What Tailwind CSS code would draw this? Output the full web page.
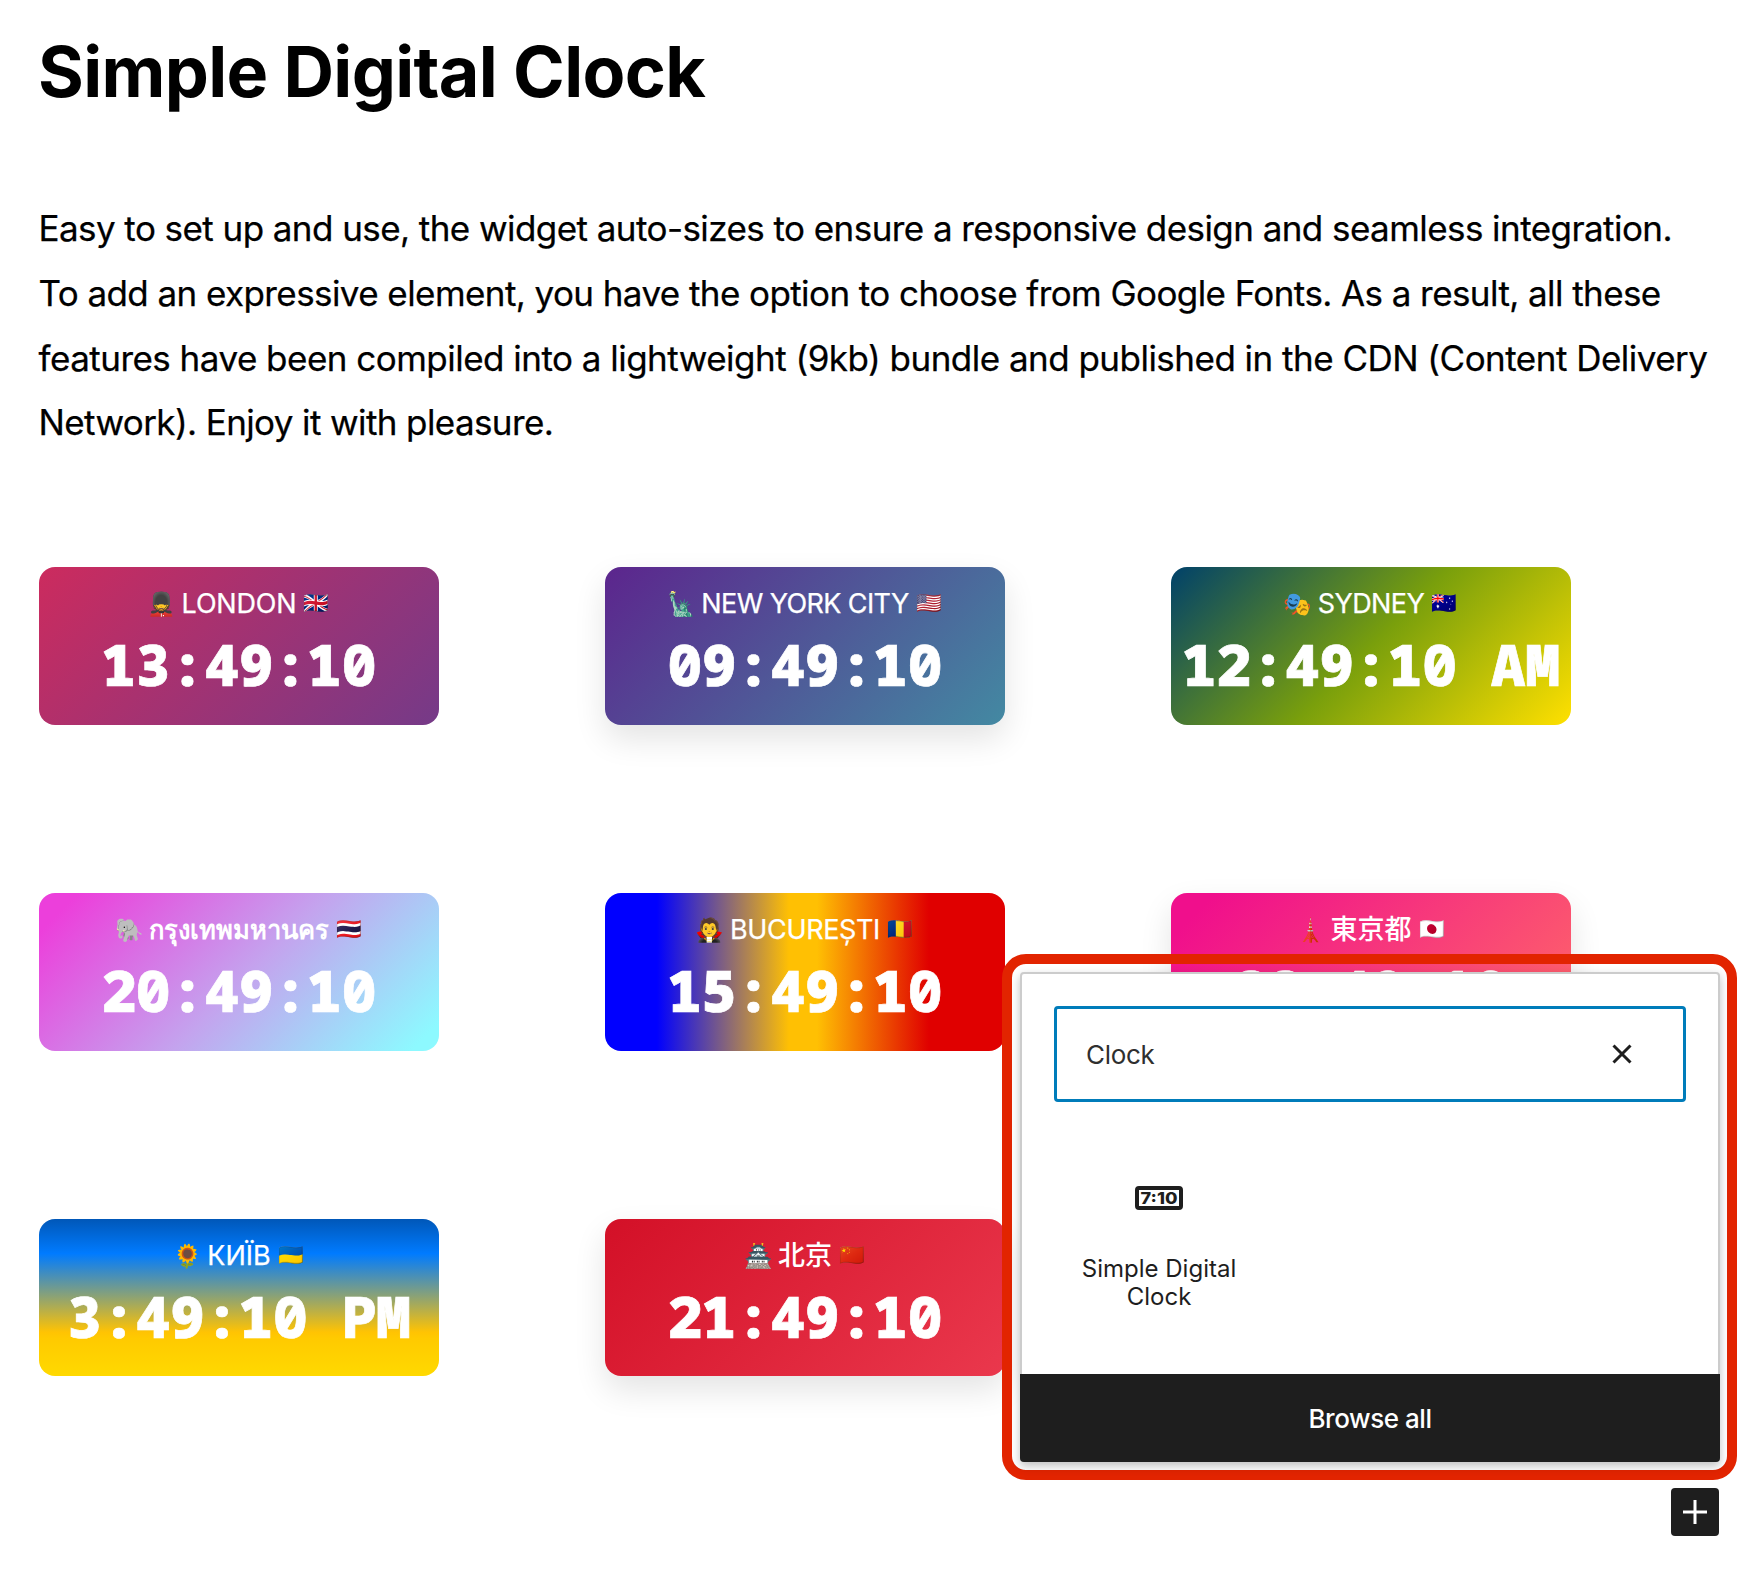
<!DOCTYPE html>
<html lang="en">
<head>
<meta charset="utf-8">
<title>Simple Digital Clock</title>
<script src="https://cdn.jsdelivr.net/npm/@tailwindcss/browser@4"></script>
</head>
<body class="relative h-[1570px] w-[1758px] overflow-hidden bg-white font-['Inter','Noto_Sans_CJK_JP',sans-serif] text-black">
<main class="flex flex-col pt-[29.5px]">
  <h1 class="pl-[38px] text-[70px] leading-[84px] font-bold tracking-[-0.66px]">Simple Digital Clock</h1>
  <p class="mt-[82.5px] pl-[38.5px] text-[35px] leading-[64.75px] whitespace-nowrap [-webkit-text-stroke:0.25px_black]">
    <span class="block tracking-[-0.565px]">Easy to set up and use, the widget auto-sizes to ensure a responsive design and seamless integration.</span>
    <span class="block tracking-[-0.58px]">To add an expressive element, you have the option to choose from Google Fonts. As a result, all these</span>
    <span class="block tracking-[-0.52px]">features have been compiled into a lightweight (9kb) bundle and published in the CDN (Content Delivery</span>
    <span class="block tracking-[-0.61px]">Network). Enjoy it with pleasure.</span>
  </p>

  <section class="mt-[112px] ml-[39px] grid grid-cols-[400px_400px_400px] gap-x-[166px] gap-y-[168px] text-white">
    <article class="flex h-[158px] flex-col items-center rounded-2xl bg-[linear-gradient(135deg,#cc2b5e,#753a88)] pt-[21px]">
      <div class="flex h-8 items-center gap-1.5 text-[27px] tracking-[-0.2px] whitespace-nowrap"><span class="flex w-7 justify-center text-[23px] tracking-normal">💂</span><span class="[-webkit-text-stroke:0.25px_white]">LONDON</span><span class="flex w-7 justify-center pb-0.5 text-[20.5px] tracking-normal">🇬🇧</span></div>
      <time class="mt-[14px] font-['Noto_Sans_Mono',monospace] text-[57.2px] leading-[60px] font-black whitespace-pre [-webkit-text-stroke:0.7px_white]">13:49:10</time>
    </article>
    <article class="flex h-[158px] flex-col items-center rounded-2xl bg-[linear-gradient(135deg,#5c258d,#4389a2)] pt-[21px] shadow-[0_14px_32px_rgba(0,0,0,0.11)]">
      <div class="flex h-8 items-center gap-1.5 text-[27px] tracking-[-0.6px] whitespace-nowrap"><span class="flex w-7 justify-center text-[23px] tracking-normal">🗽</span><span class="[-webkit-text-stroke:0.25px_white]">NEW YORK CITY</span><span class="flex w-7 justify-center pb-0.5 text-[20.5px] tracking-normal">🇺🇸</span></div>
      <time class="mt-[14px] font-['Noto_Sans_Mono',monospace] text-[57.2px] leading-[60px] font-black whitespace-pre [-webkit-text-stroke:0.7px_white]">09:49:10</time>
    </article>
    <article class="flex h-[158px] flex-col items-center rounded-2xl bg-[linear-gradient(135deg,#00416a,#799f0c_50%,#ffe000)] pt-[21px]">
      <div class="flex h-8 items-center gap-1.5 text-[27px] tracking-[-0.6px] whitespace-nowrap"><span class="flex w-7 justify-center text-[23px] tracking-normal">🎭</span><span class="[-webkit-text-stroke:0.25px_white]">SYDNEY</span><span class="flex w-7 justify-center pb-0.5 text-[20.5px] tracking-normal">🇦🇺</span></div>
      <time class="mt-[14px] font-['Noto_Sans_Mono',monospace] text-[57.2px] leading-[60px] font-black whitespace-pre [-webkit-text-stroke:0.7px_white]">12:49:10 AM</time>
    </article>

    <article class="flex h-[158px] flex-col items-center rounded-2xl bg-[linear-gradient(135deg,#ec3fdb_7%,#c4a3ee_52%,#8df9ff_95%)] pt-[21px]">
      <div class="flex h-8 items-center gap-1.5 text-[25.5px] font-semibold whitespace-nowrap"><span class="flex w-7 justify-center text-[23px] font-normal">🐘</span><span>กรุงเทพมหานคร</span><span class="flex w-7 justify-center pb-0.5 text-[20.5px] font-normal">🇹🇭</span></div>
      <time class="mt-[14px] font-['Noto_Sans_Mono',monospace] text-[57.2px] leading-[60px] font-black whitespace-pre [-webkit-text-stroke:0.7px_white]">20:49:10</time>
    </article>
    <article class="flex h-[158px] flex-col items-center rounded-2xl bg-[linear-gradient(90deg,#00f_13%,#ffc003_46%,#ffc003_53%,#e00000_81%)] pt-[21px]">
      <div class="flex h-8 items-center gap-1.5 text-[27px] tracking-[-0.35px] whitespace-nowrap"><span class="flex w-7 justify-center text-[23px] tracking-normal">🧛</span><span class="[-webkit-text-stroke:0.25px_white]">BUCUREȘTI</span><span class="flex w-7 justify-center pb-0.5 text-[20.5px] tracking-normal">🇷🇴</span></div>
      <time class="mt-[14px] font-['Noto_Sans_Mono',monospace] text-[57.2px] leading-[60px] font-black whitespace-pre [-webkit-text-stroke:0.7px_white]">15:49:10</time>
    </article>
    <article class="flex h-[158px] flex-col items-center rounded-2xl bg-[linear-gradient(135deg,#f00f8c_8%,#ff6a67)] pt-[21px] shadow-[0_14px_32px_rgba(0,0,0,0.11)]">
      <div class="flex h-8 items-center gap-1.5 text-[27px] font-medium whitespace-nowrap"><span class="flex w-7 justify-center text-[23px] font-normal">🗼</span><span>東京都</span><span class="flex w-7 justify-center pb-0.5 text-[20.5px] font-normal">🇯🇵</span></div>
      <time class="mt-[14px] font-['Noto_Sans_Mono',monospace] text-[57.2px] leading-[60px] font-black whitespace-pre [-webkit-text-stroke:0.7px_white]">22:49:10</time>
    </article>

    <article class="flex h-[157px] flex-col items-center rounded-2xl bg-[linear-gradient(180deg,#0057b8,#007bff_22%,#ffc303_72%,#ffca00_76%,#ffd900)] pt-[21px]">
      <div class="flex h-8 items-center gap-1.5 text-[27px] whitespace-nowrap"><span class="flex w-7 justify-center text-[23px]">🌻</span><span class="[-webkit-text-stroke:0.25px_white]">КИЇВ</span><span class="flex w-7 justify-center pb-0.5 text-[20.5px]">🇺🇦</span></div>
      <time class="mt-[14px] font-['Noto_Sans_Mono',monospace] text-[57.2px] leading-[60px] font-black whitespace-pre [-webkit-text-stroke:0.7px_white]">3:49:10 PM</time>
    </article>
    <article class="flex h-[157px] flex-col items-center rounded-2xl bg-[linear-gradient(135deg,#d31027,#ea384d)] pt-[21px] shadow-[0_14px_32px_rgba(0,0,0,0.11)]">
      <div class="flex h-8 items-center gap-1.5 text-[27px] font-medium whitespace-nowrap"><span class="flex w-7 justify-center text-[23px] font-normal">🏯</span><span>北京</span><span class="flex w-7 justify-center pb-0.5 text-[20.5px] font-normal">🇨🇳</span></div>
      <time class="mt-[14px] font-['Noto_Sans_Mono',monospace] text-[57.2px] leading-[60px] font-black whitespace-pre [-webkit-text-stroke:0.7px_white]">21:49:10</time>
    </article>
  </section>

  <button class="mt-[112px] mr-[39px] flex size-12 items-center justify-center self-end rounded-[4px] bg-[#1e1e1e]">
    <svg class="size-6" viewBox="0 0 24 24" fill="none" stroke="#fff" stroke-width="3"><path d="M12 0v24M0 12h24"/></svg>
  </button>
</main>

<!-- Block inserter popover with its highlight frame -->
<div class="absolute top-[954px] left-[1002px] h-[526px] w-[735px] rounded-[24px] border-[10px] border-[#e22400] p-2">
  <div class="flex h-[490px] w-[700px] flex-col rounded-[4px] border-2 border-[#ccc] bg-white text-[#1e1e1e] shadow-[0_4px_10px_rgba(0,0,0,0.25)]">
    <div class="mx-8 mt-8 flex h-24 shrink-0 items-center justify-between rounded-[4px] border-3 border-[#007cba] pr-[49px] pl-[29px]">
      <span class="text-[26px] tracking-[-0.3px] text-[#2f2f2f]">Clock</span>
      <svg class="size-6" viewBox="0 0 24 24" fill="none" stroke="#1e1e1e" stroke-width="3"><path d="M3.5 3.5l17 17M20.5 3.5l-17 17"/></svg>
    </div>
    <div class="mt-[84px] ml-8 flex w-[210px] flex-col items-center">
      <svg class="h-6 w-12" viewBox="0 0 48 24"><rect x="2" y="2" width="44" height="20" rx="2" fill="none" stroke="#1e1e1e" stroke-width="4"/><text x="5.5" y="18" textLength="37" lengthAdjust="spacingAndGlyphs" class="font-['Inter',sans-serif] text-[16.5px] font-extrabold" fill="#1e1e1e">7:10</text></svg>
      <span class="mt-[44.5px] text-center text-[24px] leading-7">Simple Digital<br>Clock</span>
    </div>
    <button class="-mx-0.5 mt-auto -mb-0.5 h-[88px] shrink-0 rounded-b-[4px] bg-[#1e1e1e] text-[26px] font-medium tracking-[-0.45px] text-white">Browse all</button>
  </div>
</div>
</body>
</html>
